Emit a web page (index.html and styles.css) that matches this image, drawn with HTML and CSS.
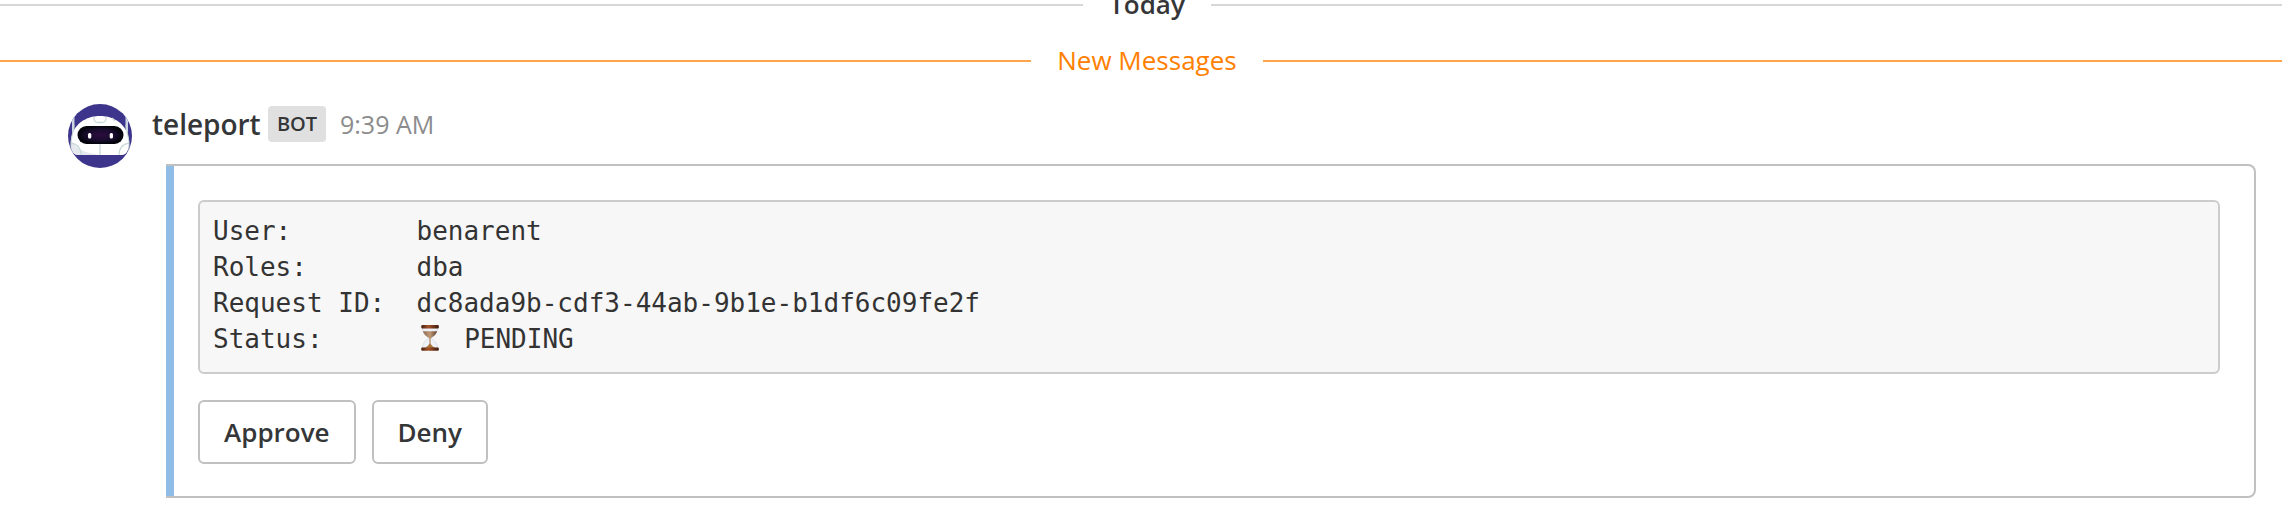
FILE: index.html
```html
<!DOCTYPE html>
<html lang="en">
<head>
<meta charset="utf-8">
<title>Messages</title>
<link rel="stylesheet" href="styles.css">
</head>
<body>
<div class="separator separator-date"><span class="separator-text">Today</span></div>
<div class="separator separator-new"><span class="separator-text">New Messages</span></div>
<article class="post">
  <svg class="avatar" viewBox="0 0 64 64" aria-hidden="true">
    <defs>
      <clipPath id="disc"><circle cx="32" cy="32" r="32"/></clipPath>
      <radialGradient id="visor" cx=".5" cy=".5" r=".5">
        <stop offset="0" stop-color="#2d0d3f"/><stop offset=".65" stop-color="#170c2c"/><stop offset="1" stop-color="#02030a"/>
      </radialGradient>
    </defs>
    <g clip-path="url(#disc)">
      <rect width="64" height="64" fill="#3d358b"/>
      <path d="M4 10h2.500v18H4zM57.500 10H60v18h-2.500z" fill="#cbd5e3"/>
      <path d="M3 51V36C5 20 18 12 32 12s27 8 29 24v5c0 5-3 10-7 10H10C6 51 3 47 3 41z" fill="#fff"/>
      <path d="M3 35c3 9 13 14 29 16H10C6 51 3 47 3 41z" fill="#e5e8ef"/>
      <g fill="none" stroke="#cbd9d9" stroke-width="1.300">
        <path d="M26 12.500v2c0 2 1.500 4 4 4h4c2.500 0 4-2 4-4v-2M44 14l3 3M3 39c6 1 10 5 10 12M61 39c-6 1-10 5-10 12M32 40v11"/>
      </g>
      <path d="M6 21L3 38v10M58 21l3 17v10" fill="none" stroke="#cbd9d9"/>
      <rect x="9.500" y="22" width="46" height="18" rx="9" fill="url(#visor)"/>
      <rect x="20" y="29" width="3.300" height="5.500" rx="1.500" fill="#fff"/>
      <rect x="41.700" y="29" width="3.300" height="5.500" rx="1.500" fill="#fff"/>
    </g>
  </svg>
  <div class="post-content">
    <header class="post-header">
      <span class="post-author">teleport</span>
      <span class="bot-tag">BOT</span>
      <time class="post-time">9:39 AM</time>
    </header>
    <section class="attachment">
      <div class="attachment-body">
<pre class="code">User:        benarent
Roles:       dba
Request ID:  dc8ada9b-cdf3-44ab-9b1e-b1df6c09fe2f
Status:      <svg class="hourglass" viewBox="0 0 32 28" aria-hidden="true"><defs><linearGradient id="wood"><stop offset="0" stop-color="#46200f"/><stop offset=".4" stop-color="#a4532a"/><stop offset="1" stop-color="#3e1a0c"/></linearGradient><linearGradient id="sand"><stop offset="0" stop-color="#8d6b50"/><stop offset=".5" stop-color="#c09a78"/><stop offset="1" stop-color="#604028"/></linearGradient></defs><path d="M5.500 4h15c0 5-3.500 8-6.800 10 3.300 2 6.800 5 6.800 10H5.500c0-5 3.500-8 6.800-10C9 12 5.500 9 5.500 4z" fill="#eef1f7" stroke="#cdd3e2" stroke-width=".7"/><path d="M5.900 7.200h14.200c-.7 3-3.400 5-6.400 7h-1.400c-3-2-5.700-4-6.400-7z" fill="url(#sand)"/><path d="M12.500 14h1v5.500c1 2 3 3.600 5 4.500H7.500c2-.9 4-2.500 5-4.500z" fill="#a8743c"/><rect x="4.300" y="1" width="17.500" height="3.400" rx="1" fill="url(#wood)"/><rect x="4.300" y="23.500" width="17.500" height="3.300" rx="1" fill="url(#wood)"/></svg> PENDING</pre>
        <div class="actions">
          <button class="action" type="button">Approve</button>
          <button class="action" type="button">Deny</button>
        </div>
      </div>
    </section>
  </div>
</article>
</body>
</html>
```
FILE: styles.css
```css
* { box-sizing: border-box; }
html { overflow: hidden; }
body {
  margin: 0;
  height: 516px;
  overflow: hidden;
  background: #fff;
  color: #353638;
  font-family: "Open Sans", sans-serif;
  font-size: 26px;
}
.separator {
  display: flex;
  align-items: center;
  height: 56px;
  line-height: 36px;
}
.separator::before, .separator::after {
  content: "";
  flex: 1 1 0;
  height: 2px;
  background: #d7d7d7;
}
.separator::before { flex-basis: 12px; }
.separator-text { padding: 0 26px 2px; }
.separator-date { margin-top: -23px; font-weight: 600; }
.separator-new { color: #ff8000; }
.separator-new::before, .separator-new::after { background: #ffa44a; }
.post {
  display: flex;
  gap: 20px;
  padding: 15px 26px 0 68px;
}
.avatar { flex: none; width: 64px; height: 64px; }
.post-content { flex: 1; min-width: 0; }
.post-header {
  display: flex;
  align-items: center;
  height: 40px;
  line-height: 36px;
}
.post-author { width: 108px; padding-bottom: 1px; font-size: 28px; font-weight: 600; letter-spacing: -0.02px; white-space: nowrap; }
.bot-tag {
  width: 58px;
  height: 36px;
  margin: 0 14px 0 8px;
  border-radius: 4px;
  background: #e0e0e0;
  font-size: 20px;
  font-weight: 600;
  text-align: center;
}
.post-time { color: #8c8c8d; font-size: 25px; }
.attachment {
  height: 334px;
  margin: 20px 0 0 14px;
  border: 2px solid #c0c0c0;
  border-left: 0;
  border-radius: 0 8px 8px 0;
}
.attachment-body {
  height: 330px;
  padding: 34px 34px 0 24px;
  border-left: 8px solid #8fbde8;
}
.code {
  height: 174px;
  margin: 0;
  padding: 11px 13px;
  border: 2px solid #cccccc;
  border-radius: 6px;
  background: #f7f7f7;
  color: #333;
  font: 26px/36px "DejaVu Sans Mono", monospace;
}
.hourglass { width: 32px; height: 28px; vertical-align: -4px; }
.actions { display: flex; gap: 16px; margin-top: 26px; }
.action {
  height: 64px;
  padding: 0 24px;
  border: 2px solid #c0c0c0;
  border-radius: 6px;
  background: #fff;
  color: #353638;
  font: 600 26px/36px "Open Sans", sans-serif;
}
```
